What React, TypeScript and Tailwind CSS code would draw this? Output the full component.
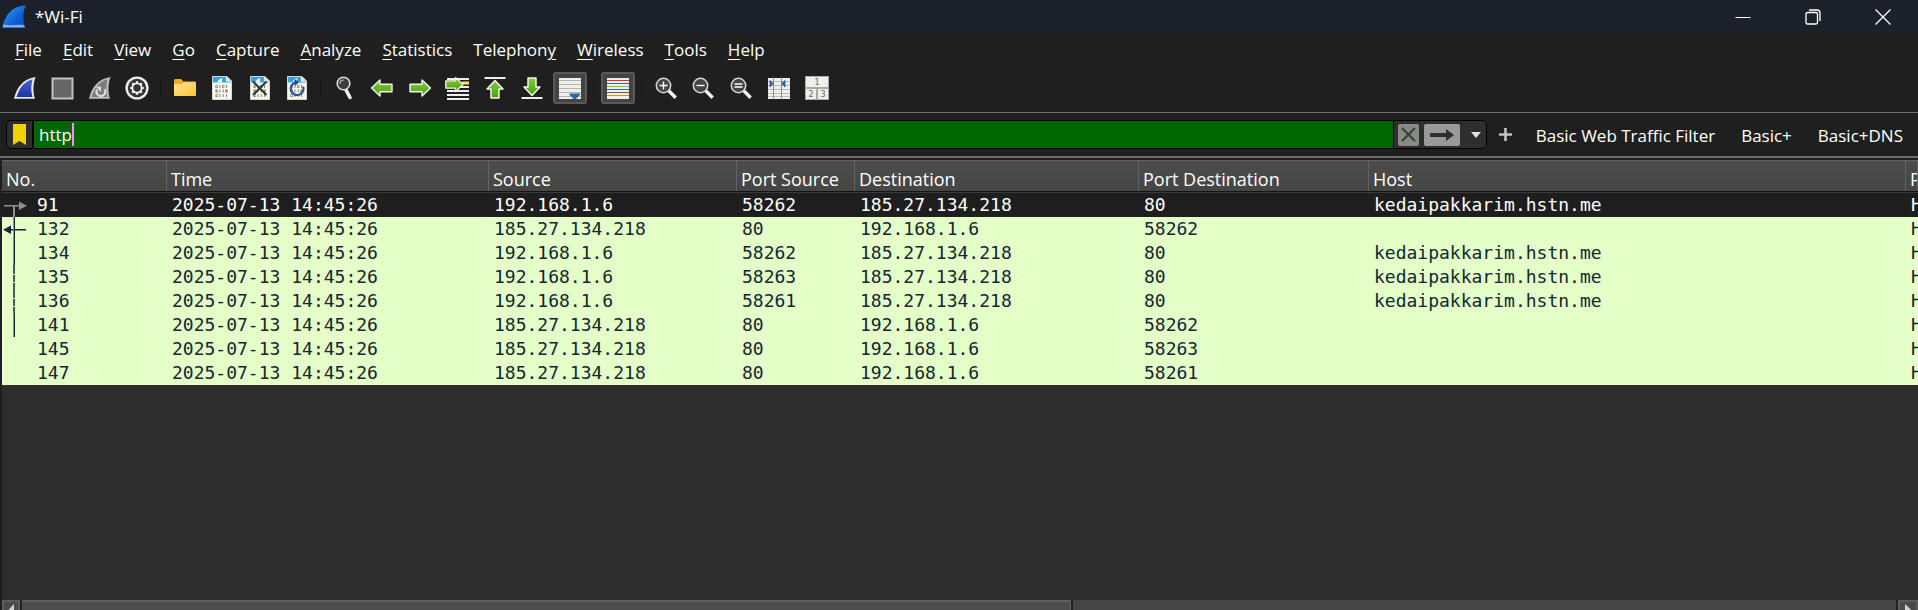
import { useState } from 'react';
import type { ReactNode } from 'react';

type Link = 'request' | 'response' | 'line' | 'dashed' | 'none';

interface Packet {
  no: number;
  time: string;
  source: string;
  sourcePort: string;
  destination: string;
  destinationPort: string;
  host: string;
  protocol: string;
  link: Link;
}

const TIME = '2025-07-13 14:45:26';
const CLIENT = '192.168.1.6';
const SERVER = '185.27.134.218';
const HOST = 'kedaipakkarim.hstn.me';

const outgoing = (no: number, port: string, link: Link): Packet => ({
  no, time: TIME, source: CLIENT, sourcePort: port, destination: SERVER,
  destinationPort: '80', host: HOST, protocol: 'HTTP', link,
});

const incoming = (no: number, port: string, link: Link): Packet => ({
  no, time: TIME, source: SERVER, sourcePort: '80', destination: CLIENT,
  destinationPort: port, host: '', protocol: 'HTTP', link,
});

const packets: Packet[] = [
  outgoing(91, '58262', 'request'),
  incoming(132, '58262', 'response'),
  outgoing(134, '58262', 'line'),
  outgoing(135, '58263', 'dashed'),
  outgoing(136, '58261', 'dashed'),
  incoming(141, '58262', 'line'),
  incoming(145, '58263', 'none'),
  incoming(147, '58261', 'none'),
];

const columns = [
  { title: 'No.', width: 'w-[165px]' },
  { title: 'Time', width: 'w-[322px]' },
  { title: 'Source', width: 'w-[248px]' },
  { title: 'Port Source', width: 'w-[118px]' },
  { title: 'Destination', width: 'w-[284px]' },
  { title: 'Port Destination', width: 'w-[230px]' },
  { title: 'Host', width: 'w-[537px]' },
  { title: 'Protocol', width: '' },
];

const menus: [string, string, string][] = [
  ['', 'F', 'ile'],
  ['', 'E', 'dit'],
  ['', 'V', 'iew'],
  ['', 'G', 'o'],
  ['', 'C', 'apture'],
  ['', 'A', 'nalyze'],
  ['', 'S', 'tatistics'],
  ['Telephon', 'y', ''],
  ['', 'W', 'ireless'],
  ['', 'T', 'ools'],
  ['', 'H', 'elp'],
];

function Icon({ children }: { children: ReactNode }) {
  return (
    <svg width="24" height="24" viewBox="0 0 24 24" fill="none" aria-hidden="true">
      {children}
    </svg>
  );
}

const FIN = 'M1 22.8C3.5 11.5 10.5 2.5 22.6 1C20 7.5 19.8 16 22 22.8Z';

function StartIcon() {
  return (
    <Icon>
      <defs>
        <linearGradient id="start-fin" x1="0" y1="0" x2="0" y2="1">
          <stop offset="0" stopColor="#4a62d2" />
          <stop offset="1" stopColor="#1b34a8" />
        </linearGradient>
      </defs>
      <path d={FIN} fill="#e8e8e8" />
      <path d="M3.6 21C6.3 12 11.2 5.3 19.6 3.2C17.9 9 17.8 15.2 19.5 21Z" fill="url(#start-fin)" />
    </Icon>
  );
}

function StopIcon() {
  return (
    <Icon>
      <rect x="2.5" y="2.5" width="20" height="20" fill="#666" stroke="#c2c2c2" strokeWidth="2" />
    </Icon>
  );
}

function RestartIcon() {
  return (
    <Icon>
      <path d={FIN} fill="#bdbdbd" />
      <path d="M3.6 21C6.3 12 11.2 5.3 19.6 3.2C17.9 9 17.8 15.2 19.5 21Z" fill="#7b7b7b" />
      <path d="M9.2 13.5A4.3 4.3 0 1 0 16.5 13.4" stroke="#dcdcdc" strokeWidth="2.2" />
      <path d="M7.6 10.6H13V16Z" fill="#dcdcdc" />
    </Icon>
  );
}

function OptionsIcon() {
  const teeth = [0, 45, 90, 135, 180, 225, 270, 315];
  return (
    <Icon>
      <circle cx="12" cy="12" r="11.6" fill="#ededed" />
      <circle cx="12" cy="12" r="9.2" fill="#333" />
      <circle cx="12" cy="12" r="4.6" stroke="#f4f4f4" strokeWidth="1.8" />
      {teeth.map((angle) => (
        <path key={angle} d="M12 5.2V7.6" stroke="#f4f4f4" strokeWidth="2.2" transform={`rotate(${angle} 12 12)`} />
      ))}
    </Icon>
  );
}

function FolderIcon() {
  return (
    <Icon>
      <defs>
        <linearGradient id="folder" x1="0" y1="0" x2="1" y2="1">
          <stop offset="0" stopColor="#ffe596" />
          <stop offset="1" stopColor="#fbc43a" />
        </linearGradient>
      </defs>
      <path d="M1 4.5Q1 3 2.5 3H8L10.5 5.5H22Q23 5.5 23 6.5V12H1Z" fill="#f3ac1c" />
      <path d="M1 8H8.5L11 6.2H23V19Q23 20 22 20H2Q1 20 1 19Z" fill="url(#folder)" />
    </Icon>
  );
}

function Digits({ x, y, bits }: { x: number; y: number; bits: string }) {
  return (
    <>
      {bits.split('').map((bit, i) =>
        bit === '1' ? (
          <rect key={i} x={x + i * 3.3 + 0.6} y={y} width="1" height="3" fill="#85857d" />
        ) : (
          <rect key={i} x={x + i * 3.3 + 0.3} y={y + 0.3} width="1.6" height="2.4" stroke="#85857d" strokeWidth="0.7" />
        ),
      )}
    </>
  );
}

function FileIcon({ children }: { children?: ReactNode }) {
  return (
    <Icon>
      <path d="M2.5 .5H17L21.5 5V23.5H2.5Z" fill="#f8f8ec" stroke="#d7d7cc" />
      <path d="M3 1H16V5.5H21V6.5H3Z" fill="#35a5dc" />
      <path d="M7 6.5C8 4 10 2.6 12.5 2.2C11.7 3.6 11.8 5.2 12.2 6.5Z" fill="#f4f8f6" />
      <path d="M16.5 .8V5.4H21.2Z" fill="#dfe0da" />
      <Digits x={5.5} y={9} bits="0101" />
      <Digits x={5.5} y={13.5} bits="0110" />
      <Digits x={5.5} y={18} bits="0111" />
      {children}
    </Icon>
  );
}

function CloseFileIcon() {
  return (
    <FileIcon>
      <path d="M5 5.5L18.5 19M18.5 5.5L5 19" stroke="#2b3336" strokeWidth="2" />
    </FileIcon>
  );
}

function ReloadIcon() {
  return (
    <FileIcon>
      <path d="M10.5 6.4A6.4 6.4 0 1 0 18.2 10.5" stroke="#2a5599" strokeWidth="2.2" />
      <path d="M9.4 3L14.2 6.3L9.8 10Z" fill="#1f4d94" />
    </FileIcon>
  );
}

function FindIcon() {
  return (
    <Icon>
      <path d="M13 14L17 21.5" stroke="#f2f2f2" strokeWidth="3.6" strokeLinecap="round" />
      <circle cx="10.5" cy="7.5" r="6.3" fill="#3d3d3d" stroke="#dcdcdc" strokeWidth="1.6" />
      <path d="M7 8A4 4 0 0 1 10.8 4" stroke="#a5a5a5" strokeWidth="1.4" />
    </Icon>
  );
}

function GreenGradient({ id }: { id: string }) {
  return (
    <defs>
      <linearGradient id={id} x1="0" y1="0" x2="0" y2="1">
        <stop offset="0" stopColor="#86cc3c" />
        <stop offset="1" stopColor="#48a008" />
      </linearGradient>
    </defs>
  );
}

function BackIcon() {
  return (
    <Icon>
      <GreenGradient id="green-back" />
      <path d="M1.5 12L10 4V8.3H22V15.7H10V20Z" fill="url(#green-back)" stroke="#f3f6ee" strokeWidth="1.4" strokeLinejoin="round" />
    </Icon>
  );
}

function ForwardIcon() {
  return (
    <Icon>
      <GreenGradient id="green-forward" />
      <path d="M22.5 12L14 4V8.3H2V15.7H14V20Z" fill="url(#green-forward)" stroke="#f3f6ee" strokeWidth="1.4" strokeLinejoin="round" />
    </Icon>
  );
}

function GoToIcon() {
  return (
    <Icon>
      <GreenGradient id="green-goto" />
      {[2, 6, 10, 14, 18, 22].map((y) => (
        <rect key={y} x="2" y={y} width="22" height="2" fill="#efefef" />
      ))}
      <rect x="17" y="5.5" width="7" height="3" fill="#ffe24a" />
      <path d="M18 8.5L10.5 1.5V4.8H.8V12.2H10.5V15.5Z" fill="url(#green-goto)" stroke="#f3f6ee" strokeWidth="1.3" strokeLinejoin="round" />
    </Icon>
  );
}

function FirstIcon() {
  return (
    <Icon>
      <GreenGradient id="green-first" />
      <path d="M1.5 2H22.5" stroke="#ececec" strokeWidth="2" />
      <path d="M12 4.5L20 13H16V22H8V13H4Z" fill="url(#green-first)" stroke="#f3f6ee" strokeWidth="1.5" strokeLinejoin="round" />
    </Icon>
  );
}

function LastIcon() {
  return (
    <Icon>
      <GreenGradient id="green-last" />
      <path d="M1.5 22H22.5" stroke="#ececec" strokeWidth="2" />
      <path d="M12 19.5L20 11H16V2H8V11H4Z" fill="url(#green-last)" stroke="#f3f6ee" strokeWidth="1.5" strokeLinejoin="round" />
    </Icon>
  );
}

function AutoScrollIcon() {
  return (
    <Icon>
      <rect x="1" y="2" width="22" height="21" fill="#efefec" />
      {[4, 8, 12, 16, 20].map((y) => (
        <rect key={y} x="1" y={y} width="22" height="1" fill="#b5b5b0" />
      ))}
      <path d="M11.5 17.5H22V19L17.8 23H15.7L11.5 19Z" fill="#3465a4" />
    </Icon>
  );
}

function ColorizeIcon() {
  const stripes = ['#ef2929', '#3465a4', '#73d216', '#3465a4', '#75507b', '#c4a000'];
  return (
    <Icon>
      <rect x="1" y="2" width="22" height="21" fill="#eeeeec" />
      {stripes.map((color, i) => (
        <rect key={i} x="1" y={4 + i * 3} width="22" height="1" fill={color} />
      ))}
    </Icon>
  );
}

function ZoomIcon({ sign }: { sign: string }) {
  return (
    <Icon>
      <path d="M15 15L20.5 20.5" stroke="#f2f2f2" strokeWidth="3.4" strokeLinecap="square" />
      <circle cx="9.5" cy="9.5" r="7.2" fill="#444" stroke="#d4d4d4" strokeWidth="1.5" />
      <path d={sign} stroke="#fff" strokeWidth="1.4" />
    </Icon>
  );
}

function ResizeColumnsIcon() {
  return (
    <Icon>
      <rect x="1" y="2" width="22" height="21" fill="#eeeeec" />
      {[5, 9, 13, 17, 20].map((y) => (
        <rect key={y} x="1" y={y} width="22" height="1" fill="#babdb6" />
      ))}
      <path d="M6.5 1.5V23.5M14.5 1.5V23.5" stroke="#888a85" />
      <path d="M3 4.5L6.2 7.5L3 11ZM18 4.5L14.8 7.5L18 11Z" fill="#3465a4" stroke="#3465a4" />
    </Icon>
  );
}

function LayoutIcon() {
  return (
    <Icon>
      <rect x="0" y="0" width="24" height="24" fill="#a9aaa7" />
      <rect x="1" y="1" width="22" height="10" fill="#eeeeec" />
      <rect x="1" y="13" width="10" height="10" fill="#eeeeec" />
      <rect x="13" y="13" width="10" height="10" fill="#eeeeec" />
      <g fill="#666" fontFamily="DejaVu Sans" fontSize="8" textAnchor="middle">
        <text x="12" y="9">1</text>
        <text x="6" y="21">2</text>
        <text x="18" y="21">3</text>
      </g>
    </Icon>
  );
}

interface Tool {
  label: string;
  icon: ReactNode;
  pressed?: boolean;
}

const toolGroups: { width: string; tools: Tool[] }[] = [
  {
    width: 'w-[146px]',
    tools: [
      { label: 'Start capturing packets', icon: <StartIcon /> },
      { label: 'Stop capturing packets', icon: <StopIcon /> },
      { label: 'Restart current capture', icon: <RestartIcon /> },
      { label: 'Capture options', icon: <OptionsIcon /> },
    ],
  },
  {
    width: 'w-[146px]',
    tools: [
      { label: 'Open a capture file', icon: <FolderIcon /> },
      { label: 'Save this capture file', icon: <FileIcon /> },
      { label: 'Close this capture file', icon: <CloseFileIcon /> },
      { label: 'Reload this file', icon: <ReloadIcon /> },
    ],
  },
  {
    width: 'w-[259px]',
    tools: [
      { label: 'Find a packet', icon: <FindIcon /> },
      { label: 'Go back', icon: <BackIcon /> },
      { label: 'Go forward', icon: <ForwardIcon /> },
      { label: 'Go to packet', icon: <GoToIcon /> },
      { label: 'Go to the first packet', icon: <FirstIcon /> },
      { label: 'Go to the last packet', icon: <LastIcon /> },
      { label: 'Automatically scroll', icon: <AutoScrollIcon />, pressed: true },
    ],
  },
  {
    width: 'w-[34px]',
    tools: [{ label: 'Colorize packets', icon: <ColorizeIcon />, pressed: true }],
  },
  {
    width: 'w-[184px]',
    tools: [
      { label: 'Zoom in', icon: <ZoomIcon sign="M5.5 9.5H13.5M9.5 5.5V13.5" /> },
      { label: 'Zoom out', icon: <ZoomIcon sign="M5.5 9.5H13.5" /> },
      { label: 'Normal size', icon: <ZoomIcon sign="M5.5 8H13.5M5.5 11H13.5" /> },
      { label: 'Resize columns', icon: <ResizeColumnsIcon /> },
      { label: 'Reset layout', icon: <LayoutIcon /> },
    ],
  },
];

function TitleBar() {
  return (
    <header className="flex h-[33px] shrink-0 items-center justify-between bg-[#1c202a]">
      <div className="flex items-center gap-2 pl-0.5">
        <svg width="25" height="25" viewBox="0 0 25 25" aria-hidden="true">
          <defs>
            <linearGradient id="logo" x1="0" y1="0" x2="1" y2="1">
              <stop offset="0" stopColor="#35a0f8" />
              <stop offset=".6" stopColor="#0e62d8" />
              <stop offset="1" stopColor="#0a48ae" />
            </linearGradient>
          </defs>
          <path d="M.5 23.5C2.5 11 10 2 24 1.2C20.6 7.5 20.8 16 23 23.5Z" fill="url(#logo)" />
          <path d="M.5 23.5L1.5 20.2C8 22.5 16 19.6 22 21.2L23 23.5Z" fill="#7fb2ec" />
        </svg>
        <h1 className="text-[17px] leading-6">*Wi-Fi</h1>
      </div>
      <div className="flex h-full">
        <button type="button" aria-label="Minimize" className="grid w-[70px] place-items-center">
          <svg width="16" height="16" viewBox="0 0 16 16" stroke="#fff"><path d="M.5 8.5H15.5" /></svg>
        </button>
        <button type="button" aria-label="Restore" className="grid w-[70px] place-items-center">
          <svg width="16" height="16" viewBox="0 0 16 16" fill="none" stroke="#fff" strokeWidth="1.3">
            <rect x="1" y="3.5" width="11.5" height="11.5" rx="1.5" />
            <path d="M4 1H12Q15 1 15 4V12" />
          </svg>
        </button>
        <button type="button" aria-label="Close" className="grid w-[70px] place-items-center">
          <svg width="16" height="16" viewBox="0 0 16 16" stroke="#fff" strokeWidth="1.3"><path d="M.5 .5L15.5 15.5M15.5 .5L.5 15.5" /></svg>
        </button>
      </div>
    </header>
  );
}

function MenuBar() {
  return (
    <nav className="flex h-[31px] shrink-0 items-center pt-0.5 pl-1">
      {menus.map(([before, key, after]) => (
        <button key={before + key + after} type="button" className="pr-2.5 pl-[11px] text-[17px] leading-6">
          {before}
          <span className="underline decoration-1 underline-offset-[3px]">{key}</span>
          {after}
        </button>
      ))}
    </nav>
  );
}

function ToolBar() {
  return (
    <div role="toolbar" className="flex h-[48px] shrink-0 items-center gap-1.5 pl-2">
      {toolGroups.map((group, i) => (
        <div key={i} className="flex items-center gap-1.5">
          {i > 0 && <div className="h-4 w-0.5 bg-[#1a1a1a]" />}
          <div className={`flex justify-between ${group.width}`}>
            {group.tools.map((tool) => (
              <button
                key={tool.label}
                type="button"
                aria-label={tool.label}
                aria-pressed={tool.pressed}
                className={
                  tool.pressed
                    ? 'grid h-8 w-[34px] place-items-center rounded-[3px] border-2 border-[#5a5a5a] bg-[#444]'
                    : 'grid h-8 w-[33px] place-items-center'
                }
              >
                {tool.icon}
              </button>
            ))}
          </div>
        </div>
      ))}
    </div>
  );
}

function FilterBar() {
  const [filter, setFilter] = useState('http');
  return (
    <div className="flex h-[44px] shrink-0 items-center border-t border-[#6c6c6c] pr-[15px] pl-1.5">
      <div className="flex h-[29px] flex-1 overflow-hidden rounded-[5px] border border-black bg-[#2e2e2e]">
        <button type="button" aria-label="Filter bookmarks" className="grid w-[27px] place-items-center border-r-2 border-black">
          <svg width="13" height="21" viewBox="0 0 13 21" aria-hidden="true">
            <path d="M0 0H13V21L6.5 17L0 21Z" fill="#ecd400" />
          </svg>
        </button>
        <div className="relative flex-1">
          <input
            aria-label="Display filter"
            value={filter}
            onChange={(event) => setFilter(event.target.value)}
            className="block h-full w-full bg-[#006600] pl-[5px] text-[17px] leading-6 text-white outline-none"
          />
          <span className="pointer-events-none absolute top-0.5 left-[38px] h-[23px] w-0.5 bg-[#ff8cff]" />
        </div>
        <div className="flex items-center border-l border-black pl-1">
          <button type="button" aria-label="Clear filter" className="grid h-[22px] w-[21px] place-items-center rounded-[2px] bg-[#888a85]">
            <svg width="17" height="17" viewBox="0 0 17 17" stroke="#3c3e3b" strokeWidth="2.2"><path d="M2 2L15 15M15 2L2 15" /></svg>
          </button>
          <button type="button" aria-label="Apply filter" className="ml-[5px] grid h-[22px] w-9 place-items-center rounded-[2px] bg-[#999]">
            <svg width="26" height="14" viewBox="0 0 26 14" fill="#2f2f2f"><path d="M1 5H17V1L25 7L17 13V9H1Z" /></svg>
          </button>
          <button type="button" aria-label="Recent filters" className="grid h-[22px] w-[26px] place-items-center pl-1.5">
            <svg width="10" height="6" viewBox="0 0 10 6" fill="#e2e2e2"><path d="M0 0H10L5 6Z" /></svg>
          </button>
        </div>
      </div>
      <button type="button" aria-label="Add filter button" className="grid w-[38px] place-items-center">
        <svg width="13" height="13" viewBox="0 0 13 13" stroke="#c4c4c4" strokeWidth="2.6"><path d="M6.5 0V13M0 6.5H13" /></svg>
      </button>
      <div className="flex gap-[26px] pt-[3px] pl-[11px] text-[17px] leading-6">
        <button type="button">Basic Web Traffic Filter</button>
        <button type="button">Basic+</button>
        <button type="button">Basic+DNS</button>
      </div>
    </div>
  );
}

function LinkMark({ link }: { link: Link }) {
  return (
    <svg width="32" height="24" viewBox="0 0 32 24" className="shrink-0" aria-hidden="true">
      {link === 'request' && (
        <g fill="#8f8f8f">
          <rect x="2" y="12" width="17" height="1.5" />
          <path d="M17 8.5L25 12.7L17 17Z" />
          <rect x="11" y="13" width="2" height="11" />
        </g>
      )}
      {link === 'response' && (
        <g fill="#12272e">
          <rect x="7" y="12" width="17" height="1.5" />
          <path d="M9 8.5L1 12.7L9 17Z" />
        </g>
      )}
      {(link === 'line' || link === 'response') && (
        <>
          <rect x="11" width="1" height="24" fill="#8a9a7c" />
          <rect x="12" width="1" height="24" fill="#12272e" />
        </>
      )}
      {link === 'dashed' && (
        <path d="M12 0V9M12 10V17M12 18V24" stroke="#4b5c52" strokeWidth="2" />
      )}
    </svg>
  );
}

function PacketList() {
  return (
    <main className="min-h-0 flex-1 overflow-hidden border-t-2 border-[#6c6c6c] bg-[#1f1f1f] pt-0.5 pl-0.5">
      <div className="h-full overflow-hidden bg-[#2d2d2d]">
        <table className="w-full table-fixed border-collapse">
          <thead>
            <tr className="h-[33px] bg-linear-to-b from-[#4c4c4c] to-[#454545]">
              {columns.map((column) => (
                <th key={column.title} scope="col" className={`p-0 text-left font-normal ${column.width}`}>
                  <div className="flex h-[33px] flex-col">
                    <div className="flex flex-1 items-center overflow-hidden border-t border-r border-[#636363] pt-1.5 pl-1 text-[18px] leading-6 whitespace-nowrap">
                      {column.title}
                    </div>
                    <div className="h-0.5 border-b border-[#3a3a3a] bg-[#141414]" />
                  </div>
                </th>
              ))}
            </tr>
          </thead>
          <tbody className="font-['DejaVu_Sans_Mono',monospace] text-[18px] leading-6 whitespace-nowrap">
            {packets.map((packet, i) => (
              <tr key={packet.no} className={i === 0 ? 'bg-[#1e1e1e] text-white' : 'bg-[#e4ffc7] text-[#12272e]'}>
                <td className="p-0">
                  <div className="flex h-6 gap-[3px]">
                    <LinkMark link={packet.link} />
                    {packet.no}
                  </div>
                </td>
                <td className="py-0 pr-0 pl-[5px]">{packet.time}</td>
                <td className="py-0 pr-0 pl-[5px]">{packet.source}</td>
                <td className="py-0 pr-0 pl-[5px]">{packet.sourcePort}</td>
                <td className="py-0 pr-0 pl-[5px]">{packet.destination}</td>
                <td className="py-0 pr-0 pl-[5px]">{packet.destinationPort}</td>
                <td className="py-0 pr-0 pl-[5px]">{packet.host}</td>
                <td className="overflow-hidden py-0 pr-0 pl-[5px]">{packet.protocol}</td>
              </tr>
            ))}
          </tbody>
        </table>
      </div>
    </main>
  );
}

function ScrollBar() {
  return (
    <div className="h-2.5 shrink-0 overflow-hidden pl-0.5">
      <div className="flex h-5 bg-[#464646]">
        <button type="button" aria-label="Scroll left" className="w-[18px] border-2 border-[#5c5c5c] bg-[#4a4a4a]">
          <svg width="14" height="16" viewBox="0 0 14 16" fill="#d0d0d0"><path d="M10 2V16L3 9.5Z" /></svg>
        </button>
        <div className="flex flex-1 border-x-2 border-[#222]">
          <div className="w-[56%] border-t-2 border-r border-[#606060] bg-[#4d4d4d]" />
          <div className="w-0.5 bg-[#222]" />
        </div>
        <button type="button" aria-label="Scroll right" className="w-[20px] border-2 border-[#5c5c5c] bg-[#4a4a4a]">
          <svg width="15" height="16" viewBox="0 0 15 16" fill="#d0d0d0"><path d="M5 2V16L13 9.5Z" /></svg>
        </button>
      </div>
    </div>
  );
}

export default function App() {
  return (
    <div className="flex h-screen flex-col overflow-hidden bg-[#1f1f1f] font-['Open_Sans',sans-serif] text-white">
      <TitleBar />
      <MenuBar />
      <ToolBar />
      <FilterBar />
      <PacketList />
      <ScrollBar />
    </div>
  );
}
